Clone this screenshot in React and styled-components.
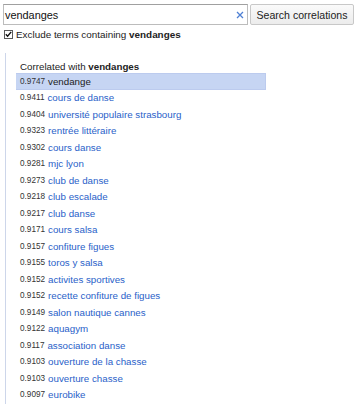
import React from "react";
import styled, { createGlobalStyle } from "styled-components";

const Global = createGlobalStyle`
  html, body { margin: 0; padding: 0; background: #fff; }
  body { font-family: "Liberation Sans", Arial, sans-serif; color: #222; overflow: hidden; }
`;

const Page = styled.div`
  width: 357px;
  height: 404px;
  overflow: hidden;
  padding: 4px 0 0 3px;
  box-sizing: border-box;
`;

const SearchRow = styled.div`
  display: flex;
  align-items: stretch;
  gap: 2px;
  height: 21px;
`;

const InputBox = styled.div`
  position: relative;
  width: 245px;
  box-sizing: border-box;
  border: 1px solid #bcbcbc;
  border-top-color: #a0a0a0;
  background: #fff;
  display: flex;
  align-items: center;
  padding: 0 0 0 1px;
`;

const InputText = styled.span`
  font-size: 10.9px;
  color: #111;
  flex: 1;
`;

const ClearIcon = styled.svg`
  width: 8px;
  height: 8px;
  margin-right: 3px;
`;

const Button = styled.div`
  width: 104px;
  box-sizing: border-box;
  border: 1px solid #c8c8c8;
  border-radius: 2px;
  background: linear-gradient(#fafafa, #ececec);
  font-size: 10.55px;
  color: #222;
  display: flex;
  align-items: center;
  justify-content: center;
`;

const CheckRow = styled.label`
  display: flex;
  align-items: center;
  gap: 3px;
  margin-top: 4px;
  padding-left: 1px;
  font-size: 9.9px;
  color: #222;
  height: 10px;
`;

const CheckBox = styled.span`
  width: 9px;
  height: 9px;
  box-sizing: border-box;
  border: 1px solid #5a5a5a;
  background: #fff;
  display: flex;
  align-items: center;
  justify-content: center;
`;

const Panel = styled.div`
  margin: 14px 0 0 2px;
  border-left: 1px solid #cdd6ea;
  padding: 8px 0 0 10px;
  height: 360px;
`;

const Heading = styled.div`
  font-size: 9.75px;
  line-height: 12px;
  padding-left: 4px;
  color: #222;
`;

const List = styled.div`
  display: flex;
  flex-direction: column;
`;

const Row = styled.div`
  width: 250px;
  height: 16.5px;
  box-sizing: border-box;
  display: flex;
  align-items: center;
  gap: 3px;
  padding-left: 4px;
  background: ${(p) => (p.$active ? "#c6d5f3" : "transparent")};
  border: 1px solid ${(p) => (p.$active ? "#bccbee" : "transparent")};
  border-left: 0;
  white-space: nowrap;
`;

const Score = styled.span`
  font-size: 8.2px;
  color: #333;
`;

const Term = styled.span`
  font-size: 9.75px;
  color: ${(p) => (p.$active ? "#222" : "#2a5fc9")};
`;

const rows = [
  ["0.9747", "vendange"],
  ["0.9411", "cours de danse"],
  ["0.9404", "université populaire strasbourg"],
  ["0.9323", "rentrée littéraire"],
  ["0.9302", "cours danse"],
  ["0.9281", "mjc lyon"],
  ["0.9273", "club de danse"],
  ["0.9218", "club escalade"],
  ["0.9217", "club danse"],
  ["0.9171", "cours salsa"],
  ["0.9157", "confiture figues"],
  ["0.9155", "toros y salsa"],
  ["0.9152", "activites sportives"],
  ["0.9152", "recette confiture de figues"],
  ["0.9149", "salon nautique cannes"],
  ["0.9122", "aquagym"],
  ["0.9117", "association danse"],
  ["0.9103", "ouverture de la chasse"],
  ["0.9103", "ouverture chasse"],
  ["0.9097", "eurobike"],
];

export default function App() {
  return (
    <Page>
      <Global />
      <SearchRow>
        <InputBox>
          <InputText>vendanges</InputText>
          <ClearIcon viewBox="0 0 8 8">
            <path d="M1 1 L7 7 M7 1 L1 7" stroke="#4f80d4" strokeWidth="1.3" />
          </ClearIcon>
        </InputBox>
        <Button>Search correlations</Button>
      </SearchRow>
      <CheckRow>
        <CheckBox>
          <svg width="7" height="7" viewBox="0 0 7 7">
            <path d="M0.8 3.3 L2.6 5.3 L6.2 0.9" stroke="#111" strokeWidth="1.4" fill="none" />
          </svg>
        </CheckBox>
        <span>
          Exclude terms containing <b>vendanges</b>
        </span>
      </CheckRow>
      <Panel>
        <Heading>
          Correlated with <b>vendanges</b>
        </Heading>
        <List>
          {rows.map(([s, t], i) => (
            <Row key={i} $active={i === 0}>
              <Score>{s}</Score>
              <Term $active={i === 0}>{t}</Term>
            </Row>
          ))}
        </List>
      </Panel>
    </Page>
  );
}
